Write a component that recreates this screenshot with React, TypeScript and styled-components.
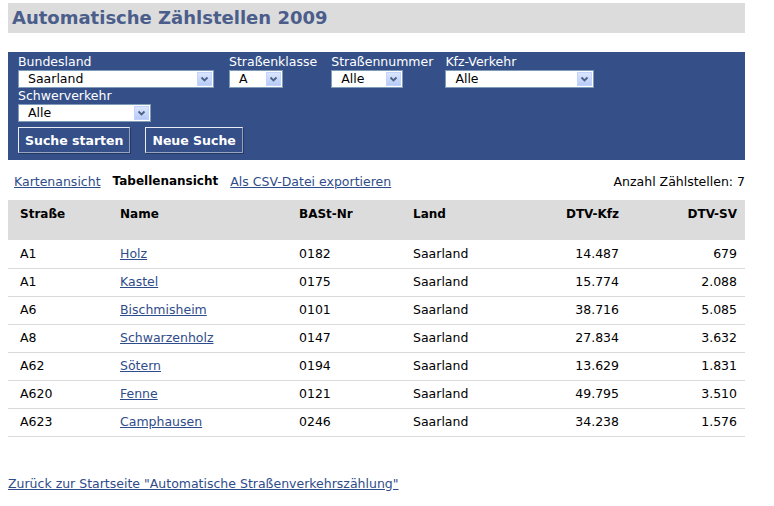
import React from "react";
import styled, { createGlobalStyle } from "styled-components";

const GlobalStyle = createGlobalStyle`
  body {
    margin: 0;
    padding: 3px 8px 0 8px;
    background: #fff;
    font-family: "DejaVu Sans", Verdana, sans-serif;
    font-size: 12.5px;
    color: #000;
  }
`;

const Page = styled.div`
  width: 737px;
`;

const TitleBar = styled.h1`
  margin: 0;
  height: 30px;
  background: #dcdcdc;
  color: #4a5d8b;
  font-size: 18px;
  font-weight: bold;
  line-height: 30px;
  padding-left: 4px;
`;

const Panel = styled.form`
  margin-top: 19px;
  background: #355089;
  padding: 2px 10px 7px 10px;
  display: flex;
  flex-direction: column;
`;

const FieldRow = styled.div`
  display: flex;
  align-items: flex-start;
`;

const Field = styled.label<{ $gap?: number }>`
  display: flex;
  flex-direction: column;
  color: #fff;
  margin-right: ${(p) => p.$gap ?? 0}px;
`;

const LabelText = styled.span`
  line-height: 16px;
  white-space: nowrap;
`;

const SelectBox = styled.div<{ $width: number }>`
  width: ${(p) => p.$width}px;
  height: 18px;
  box-sizing: border-box;
  background: #fff;
  border: 1px solid #7f9db9;
  display: flex;
  align-items: center;
  color: #000;
  padding-left: 9px;
`;

const SelectValue = styled.span`
  flex: 1;
  line-height: 16px;
`;

const ArrowButton = styled.span`
  width: 15px;
  height: 14px;
  margin-right: 1px;
  border: 1px solid #c3d3fd;
  box-sizing: border-box;
  background: linear-gradient(#dbe6fd, #b6cbf7);
  display: flex;
  align-items: center;
  justify-content: center;
`;

const Buttons = styled.div`
  display: flex;
  gap: 15px;
  margin-top: 5px;
`;

const Button = styled.button`
  font-family: "DejaVu Sans", Verdana, sans-serif;
  font-size: 12.5px;
  font-weight: bold;
  color: #fff;
  background: #355089;
  border: 1px solid #e8ecf4;
  border-right-color: #98a4bd;
  border-bottom-color: #98a4bd;
  box-shadow: 1px 1px 0 #223866;
  height: 26px;
  padding: 0 6px;
  cursor: pointer;
`;

const ViewBar = styled.div`
  display: flex;
  align-items: center;
  margin-top: 13px;
  height: 16px;
  padding-left: 6px;
`;

const ViewLink = styled.a`
  color: #2f4c8a;
  text-decoration: underline;
  margin-right: 12px;
  cursor: pointer;
`;

const ActiveView = styled.span`
  font-weight: bold;
  font-size: 12px;
  margin-right: 12px;
`;

const Count = styled.span`
  margin-left: auto;
`;

const Table = styled.table`
  width: 737px;
  margin-top: 11px;
  border-collapse: collapse;
`;

const Th = styled.th<{ $align?: string; $width?: number }>`
  background: #dcdcdc;
  height: 40px;
  box-sizing: border-box;
  text-align: ${(p) => p.$align ?? "left"};
  vertical-align: top;
  padding: 7px 8px 0 12px;
  font-weight: bold;
  font-size: 12px;
  width: ${(p) => (p.$width ? `${p.$width}px` : "auto")};
`;

const Row = styled.tr`
  height: 28px;
`;

const Td = styled.td<{ $align?: string }>`
  text-align: ${(p) => p.$align ?? "left"};
  padding: 0 8px 0 12px;
  line-height: 16px;
  border-bottom: 1px solid #d9d9d9;
`;

const NameLink = styled.a`
  color: #2f4c8a;
  text-decoration: underline;
  cursor: pointer;
`;

const Footer = styled.div`
  margin-top: 39px;
`;

const Chevron = () => (
  <svg width="9" height="6" viewBox="0 0 9 6">
    <path d="M1.5 1.5 L4.5 4.5 L7.5 1.5" fill="none" stroke="#4d6185" strokeWidth="1.8" />
  </svg>
);

const Select = ({ width, value }: { width: number; value: string }) => (
  <SelectBox $width={width}>
    <SelectValue>{value}</SelectValue>
    <ArrowButton>
      <Chevron />
    </ArrowButton>
  </SelectBox>
);

const rows = [
  ["A1", "Holz", "0182", "Saarland", "14.487", "679"],
  ["A1", "Kastel", "0175", "Saarland", "15.774", "2.088"],
  ["A6", "Bischmisheim", "0101", "Saarland", "38.716", "5.085"],
  ["A8", "Schwarzenholz", "0147", "Saarland", "27.834", "3.632"],
  ["A62", "Sötern", "0194", "Saarland", "13.629", "1.831"],
  ["A620", "Fenne", "0121", "Saarland", "49.795", "3.510"],
  ["A623", "Camphausen", "0246", "Saarland", "34.238", "1.576"],
];

export default function App() {
  return (
    <Page>
      <GlobalStyle />
      <TitleBar>Automatische Zählstellen 2009</TitleBar>
      <Panel>
        <FieldRow>
          <Field $gap={15}>
            <LabelText>Bundesland</LabelText>
            <Select width={196} value="Saarland" />
          </Field>
          <Field $gap={14}>
            <LabelText>Straßenklasse</LabelText>
            <Select width={54} value="A" />
          </Field>
          <Field $gap={12}>
            <LabelText>Straßennummer</LabelText>
            <Select width={72} value="Alle" />
          </Field>
          <Field>
            <LabelText>Kfz-Verkehr</LabelText>
            <Select width={149} value="Alle" />
          </Field>
        </FieldRow>
        <FieldRow>
          <Field>
            <LabelText>Schwerverkehr</LabelText>
            <Select width={133} value="Alle" />
          </Field>
        </FieldRow>
        <Buttons>
          <Button type="button">Suche starten</Button>
          <Button type="button">Neue Suche</Button>
        </Buttons>
      </Panel>
      <ViewBar>
        <ViewLink>Kartenansicht</ViewLink>
        <ActiveView>Tabellenansicht</ActiveView>
        <ViewLink>Als CSV-Datei exportieren</ViewLink>
        <Count>Anzahl Zählstellen: 7</Count>
      </ViewBar>
      <Table>
        <thead>
          <tr>
            <Th $width={100}>Straße</Th>
            <Th $width={179}>Name</Th>
            <Th $width={114}>BASt-Nr</Th>
            <Th $width={100}>Land</Th>
            <Th $align="right" $width={126}>DTV-Kfz</Th>
            <Th $align="right">DTV-SV</Th>
          </tr>
        </thead>
        <tbody>
          {rows.map((r, i) => (
            <Row key={i}>
              <Td>{r[0]}</Td>
              <Td>
                <NameLink>{r[1]}</NameLink>
              </Td>
              <Td>{r[2]}</Td>
              <Td>{r[3]}</Td>
              <Td $align="right">{r[4]}</Td>
              <Td $align="right">{r[5]}</Td>
            </Row>
          ))}
        </tbody>
      </Table>
      <Footer>
        <ViewLink>Zurück zur Startseite "Automatische Straßenverkehrszählung"</ViewLink>
      </Footer>
    </Page>
  );
}
